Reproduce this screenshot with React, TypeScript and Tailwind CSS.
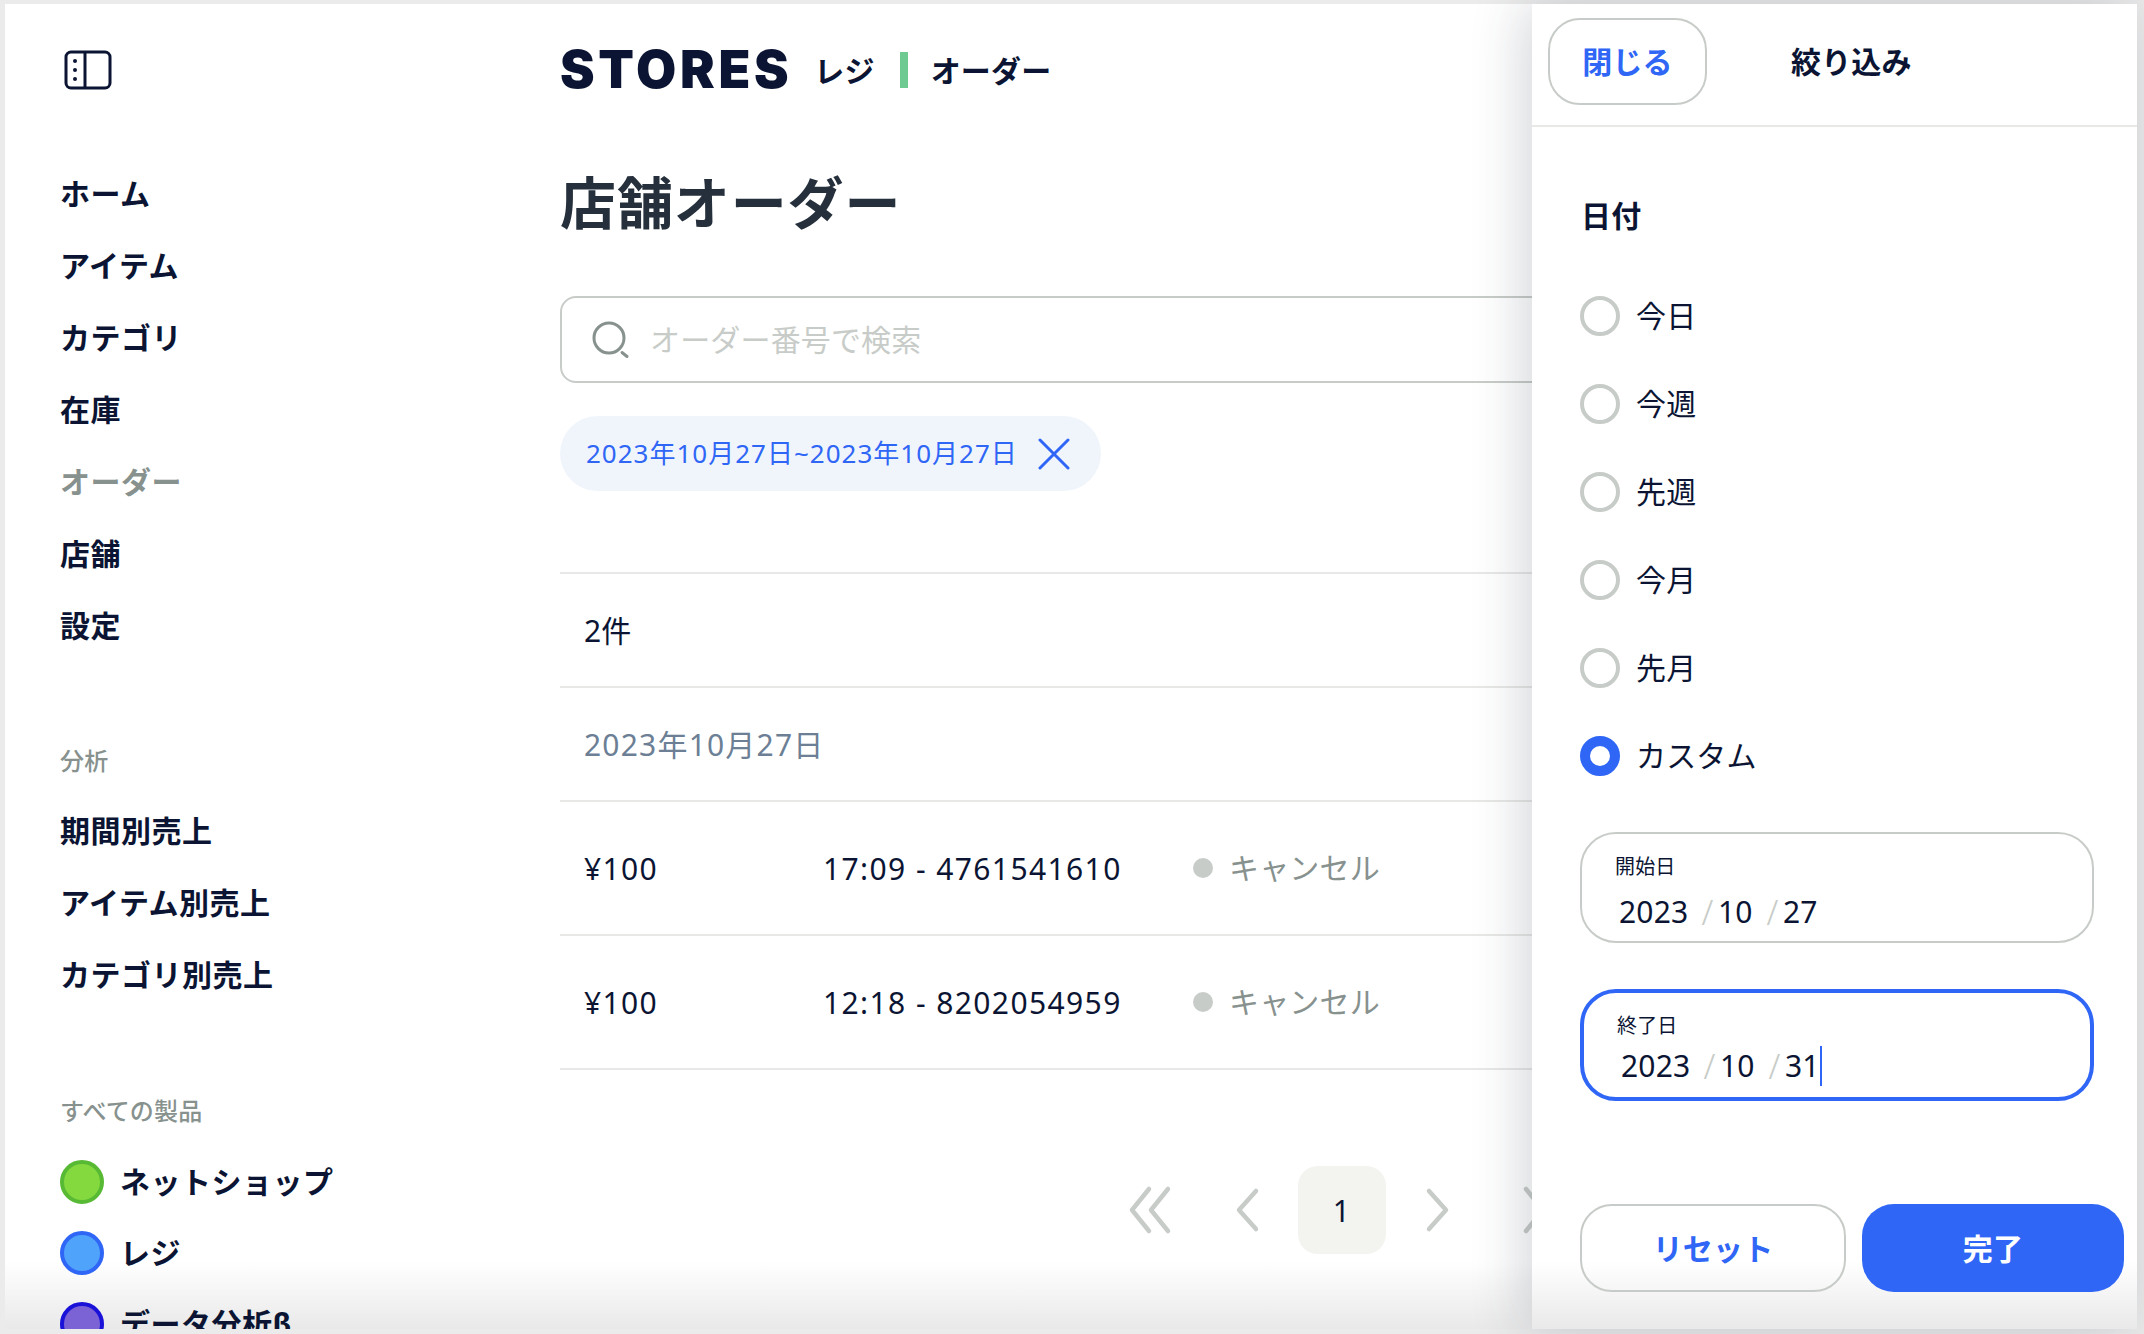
import React from "react";

const navy = "text-[#0b1533]";
const font = { fontFamily: '"Noto Sans", "Noto Sans CJK JP", sans-serif' };

function NavItem({ label, muted }: { label: string; muted?: boolean }) {
  return (
    <div className={`h-[72px] shrink-0 flex items-center text-[30px] font-bold tracking-[0.5px] ${muted ? "text-[#87918e]" : navy}`}>{label}</div>
  );
}

function SectionLabel({ label, top, bottom }: { label: string; top: string; bottom: string }) {
  return <div className={`${top} ${bottom} h-[40px] shrink-0 flex items-center text-[24px] font-medium text-[#87918e]`}>{label}</div>;
}

function Product({ label, fill, ring }: { label: string; fill: string; ring: string }) {
  return (
    <div className="h-[71px] flex items-center gap-[16px] shrink-0">
      <span className={`w-[44px] h-[44px] rounded-full border-[4px] shrink-0 ${fill} ${ring}`} />
      <span className={`text-[30px] font-bold tracking-[0.5px] ${navy}`}>{label}</span>
    </div>
  );
}

function Chevron({ d, className }: { d: string; className?: string }) {
  return (
    <svg width="88" height="88" viewBox="0 0 88 88" fill="none" stroke="#c8ccc8" strokeWidth="4.5" strokeLinecap="round" strokeLinejoin="round" className={className}>
      <path d={d} />
    </svg>
  );
}

function OrderRow({ time }: { time: string }) {
  return (
    <div className="flex items-center h-[134px] border-t-2 border-[#e8e8e6] pl-[24px] text-[30px]">
      <div className={`w-[239px] tracking-[1.3px] ${navy}`}>¥100</div>
      <div className={`w-[370px] tracking-[1.4px] ${navy}`}>{time}</div>
      <span className="w-[20px] h-[20px] rounded-full bg-[#c8ccc8] mr-[16px]" />
      <span className="text-[#87918e] -mt-[2px]">キャンセル</span>
    </div>
  );
}

function Radio({ label, checked }: { label: string; checked?: boolean }) {
  return (
    <div className="h-[88px] flex items-center gap-[16px]">
      <span className={`w-[40px] h-[40px] rounded-full bg-white ${checked ? "border-[10px] border-[#2f66f6]" : "border-[4px] border-[#c8ccc8]"}`} />
      <span className={`text-[30px] -mt-[2px] ${navy}`}>{label}</span>
    </div>
  );
}

function DateField({ label, y, m, d, focused }: { label: string; y: string; m: string; d: string; focused?: boolean }) {
  return (
    <div className={`w-[514px] rounded-[36px] pt-[19px] pl-[33px] ${focused ? "h-[112px] border-[4px] border-[#2f66f6]" : "h-[111px] border-[2px] border-[#c8ccc8]"}`}>
      <div className={`text-[20px] leading-[28px] ${navy}`}>{label}</div>
      <div className={`flex items-center text-[30px] leading-[40px] pl-[4px] ${focused ? "mt-[6px]" : "mt-[11px]"} ${navy}`}>
        <span className="w-[69px]">{y}</span>
        <span className="w-[30px] pl-[9px] text-center text-[34px] font-light text-[#c8ccc8]">/</span>
        <span className="w-[35px]">{m}</span>
        <span className="w-[30px] pl-[9px] text-center text-[34px] font-light text-[#c8ccc8]">/</span>
        <span>{d}</span>
        {focused && <span className="w-[2px] h-[40px] bg-[#2f66f6]" />}
      </div>
    </div>
  );
}

export default function App() {
  return (
    <div style={font} className="relative w-[2144px] h-[1334px] overflow-hidden bg-[#ebebeb] tracking-[0.01em]">
      <div className="absolute left-[5px] top-[4px] right-[7px] bottom-[5px] overflow-hidden bg-[linear-gradient(to_bottom,#fff_0,#fff_1258px,#e9e9e9_100%)] flex">
        {/* Sidebar */}
        <aside className="w-[555px] shrink-0 pl-[55px] flex flex-col">
          <svg width="48" height="40" viewBox="0 0 48 40" fill="none" className="mt-[46px] ml-[4px] shrink-0">
            <rect x="2" y="2" width="44" height="36" rx="5" stroke="#0b1533" strokeWidth="3" />
            <path d="M21 2V38" stroke="#0b1533" strokeWidth="3" />
            <circle cx="11" cy="11" r="2" fill="#0b1533" />
            <circle cx="11" cy="20" r="2" fill="#0b1533" />
            <circle cx="11" cy="29" r="2" fill="#0b1533" />
          </svg>
          <div className="mt-[67px] flex flex-col shrink-0">
            <NavItem label="ホーム" />
            <NavItem label="アイテム" />
            <NavItem label="カテゴリ" />
            <NavItem label="在庫" />
            <NavItem label="オーダー" muted />
            <NavItem label="店舗" />
            <NavItem label="設定" />
          </div>
          <SectionLabel label="分析" top="mt-[80px]" bottom="mb-[13px]" />
          <NavItem label="期間別売上" />
          <NavItem label="アイテム別売上" />
          <NavItem label="カテゴリ別売上" />
          <SectionLabel label="すべての製品" top="mt-[81px]" bottom="mb-[15px]" />
          <Product label="ネットショップ" fill="bg-[#84d93f]" ring="border-[#58b934]" />
          <Product label="レジ" fill="bg-[#4fa3fb]" ring="border-[#2f66f6]" />
          <Product label="データ分析β" fill="bg-[#7b63d6]" ring="border-[#1a12d8]" />
        </aside>

        {/* Main */}
        <main className="w-[1563px] shrink-0 flex flex-col">
          <div className="mt-[34px] h-[64px] shrink-0 flex items-center">
            <span className={`text-[52px] font-black tracking-[3.7px] leading-none ${navy}`} style={{ fontFamily: '"Inter", sans-serif' }}>STORES</span>
            <span className={`ml-[22px] text-[30px] font-semibold ${navy}`}>レジ</span>
            <span className="ml-[25px] w-[8px] h-[36px] bg-[#6fca92]" />
            <span className={`ml-[23px] text-[30px] font-semibold ${navy}`}>オーダー</span>
          </div>
          <h1 className="mt-[60px] h-[80px] shrink-0 flex items-center text-[56px] font-bold tracking-[0.9px] text-[#25303c]">店舗オーダー</h1>
          <div className="mt-[54px] h-[87px] shrink-0 w-[1578px] border-2 border-[#c8ccc8] rounded-[16px] flex items-center pl-[30px]">
            <svg width="38" height="38" viewBox="0 0 38 38" fill="none" stroke="#87918e" strokeWidth="3" strokeLinecap="round">
              <circle cx="17" cy="17" r="15" />
              <path d="M30 31.5l5 4" />
            </svg>
            <span className="ml-[20px] text-[30px] text-[#c8ccc8]">オーダー番号で検索</span>
          </div>
          <div className="mt-[33px] h-[75px] shrink-0 w-[541px] rounded-full bg-[#f0f5fc] flex items-center pl-[26px] text-[26px] tracking-[1px] text-[#2f66f6]">
            <span className="whitespace-nowrap">2023年10月27日~2023年10月27日</span>
            <svg width="32" height="32" viewBox="0 0 32 32" fill="none" stroke="#2f66f6" strokeWidth="3" strokeLinecap="round" className="ml-[20px]">
              <path d="M2 2L30 30M30 2L2 30" />
            </svg>
          </div>
          <div className="mt-[81px] w-[1578px] shrink-0 flex flex-col">
            <div className={`h-[114px] border-t-2 border-[#e8e8e6] pl-[24px] flex items-center text-[30px] ${navy}`}>2件</div>
            <div className="h-[114px] border-t-2 border-[#e8e8e6] pl-[24px] flex items-center text-[30px] tracking-[1.2px] text-[#6c7f95]">2023年10月27日</div>
            <OrderRow time="17:09 - 4761541610" />
            <OrderRow time="12:18 - 8202054959" />
            <div className="border-t-2 border-[#e8e8e6]" />
          </div>
          <div className="mt-[96px] shrink-0 flex justify-center gap-[12px]">
            <Chevron d="M45 23L28 44L45 65M64 23L47 44L64 65" className="translate-x-[6px]" />
            <Chevron d="M54 25L37 44L54 63" className="translate-x-[4px]" />
            <div className={`w-[88px] h-[88px] rounded-[20px] bg-[#f3f4f0] flex items-center justify-center text-[30px] ${navy}`}>1</div>
            <Chevron d="M34 25L51 44L34 63" className="-translate-x-[3px]" />
            <Chevron d="M28 23L45 44L28 65M47 23L64 44L47 65" />
          </div>
        </main>
      </div>

      {/* Filter drawer */}
      <section className="absolute top-[4px] bottom-[5px] left-[1532px] w-[605px] bg-white shadow-[-8px_0_50px_rgba(40,50,70,0.2)] flex flex-col">
        <div className="absolute left-0 right-0 bottom-0 h-[67px] bg-gradient-to-b from-white to-[#e9e9e9]" />
        <header className="relative h-[123px] shrink-0 border-b-2 border-[#e8e8e6] flex items-start pl-[16px]">
          <div className="mt-[14px] w-[159px] h-[87px] rounded-[32px] border-2 border-[#c8ccc8] flex items-center justify-center text-[30px] font-bold text-[#2f66f6]">閉じる</div>
          <div className={`ml-[84px] mt-[14px] h-[87px] flex items-center text-[30px] font-bold ${navy}`}>絞り込み</div>
        </header>
        <div className="relative pl-[48px] flex flex-col">
          <div className={`mt-[58px] h-[60px] pl-[1px] flex items-center text-[30px] font-bold ${navy}`}>日付</div>
          <div className="mt-[27px] flex flex-col">
            <Radio label="今日" />
            <Radio label="今週" />
            <Radio label="先週" />
            <Radio label="今月" />
            <Radio label="先月" />
            <Radio label="カスタム" checked />
          </div>
          <div className="mt-[32px] flex flex-col gap-[46px]">
            <DateField label="開始日" y="2023" m="10" d="27" />
            <DateField label="終了日" y="2023" m="10" d="31" focused />
          </div>
          <div className="mt-[103px] flex gap-[16px]">
            <div className="w-[266px] h-[88px] rounded-[32px] border-2 border-[#c8ccc8] flex items-center justify-center text-[30px] font-bold text-[#2f66f6]">リセット</div>
            <div className="w-[262px] h-[88px] rounded-[32px] bg-[#2f66f6] flex items-center justify-center text-[30px] font-bold text-white">完了</div>
          </div>
        </div>
      </section>
    </div>
  );
}
